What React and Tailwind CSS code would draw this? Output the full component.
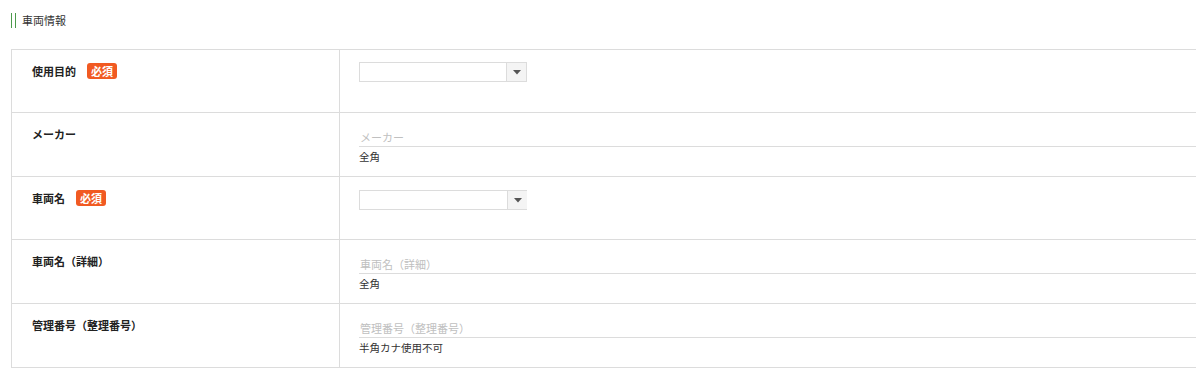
import React from "react";

const font = { fontFamily: '"Noto Sans CJK JP", "Noto Sans", sans-serif' };

function Badge() {
  return (
    <span className="ml-[11px] inline-flex h-[16px] w-[30px] items-center justify-center rounded-[3px] bg-[#f15a22] text-[11px] font-bold leading-none text-white">
      必須
    </span>
  );
}

function SelectBox({ noRight }) {
  return (
    <div className={`flex h-[20px] w-[168px] border-y border-l border-[#dcdcdc] ${noRight ? "" : "border-r"}`}>
      <div className="flex-1 bg-white" />
      <div className="flex w-[20px] items-center justify-center border-l border-[#dcdcdc] bg-[#f4f4f4]">
        <svg width="8" height="5" viewBox="0 0 8 5">
          <path d="M0 0 L8 0 L4 4.5 Z" fill="#555" />
        </svg>
      </div>
    </div>
  );
}

function TextField({ placeholder, note }) {
  return (
    <div className="pt-[13px]">
      <div className="flex h-[21px] items-end border-b border-[#dcdcdc] pb-[1px] pl-[1px] text-[11px] leading-[16px] text-[#c0c0c0]">
        {placeholder}
      </div>
      <div className="mt-[2px] text-[10.5px] leading-[16px] text-[#333]">{note}</div>
    </div>
  );
}

function Row({ label, required, h, children }) {
  return (
    <div className={`flex border-b border-[#dcdcdc] ${h}`}>
      <div className="w-[328px] shrink-0 border-r border-[#dcdcdc] pl-[20px] pt-[13px]">
        <div className="flex items-center text-[11px] font-bold leading-[16px] text-[#222]">
          <span>{label}</span>
          {required && <Badge />}
        </div>
      </div>
      <div className="flex-1 pl-[19px]">{children}</div>
    </div>
  );
}

export default function App() {
  return (
    <div className="w-full overflow-hidden bg-white h-[368px]" style={font}>
      <div className="flex items-center pl-[11px] pt-[13px]">
        <div className="flex h-[15px] gap-[3px]">
          <div className="w-px bg-[#4c9a4c]" />
          <div className="w-px bg-[#4c9a4c]" />
        </div>
        <span className="ml-[6px] text-[11px] leading-[15px] text-[#333]">車両情報</span>
      </div>
      <div className="ml-[11px] mt-[21px] w-[1200px] border-l border-t border-[#dcdcdc]">
        <Row label="使用目的" required h="h-[63px]">
          <div className="pt-[12px]">
            <SelectBox />
          </div>
        </Row>
        <Row label="メーカー" h="h-[64px]">
          <TextField placeholder="メーカー" note="全角" />
        </Row>
        <Row label="車両名" required h="h-[63px]">
          <div className="pt-[13px]">
            <SelectBox noRight />
          </div>
        </Row>
        <Row label="車両名（詳細）" h="h-[64px]">
          <TextField placeholder="車両名（詳細）" note="全角" />
        </Row>
        <Row label="管理番号（整理番号）" h="h-[64px]">
          <TextField placeholder="管理番号（整理番号）" note="半角カナ使用不可" />
        </Row>
      </div>
    </div>
  );
}
